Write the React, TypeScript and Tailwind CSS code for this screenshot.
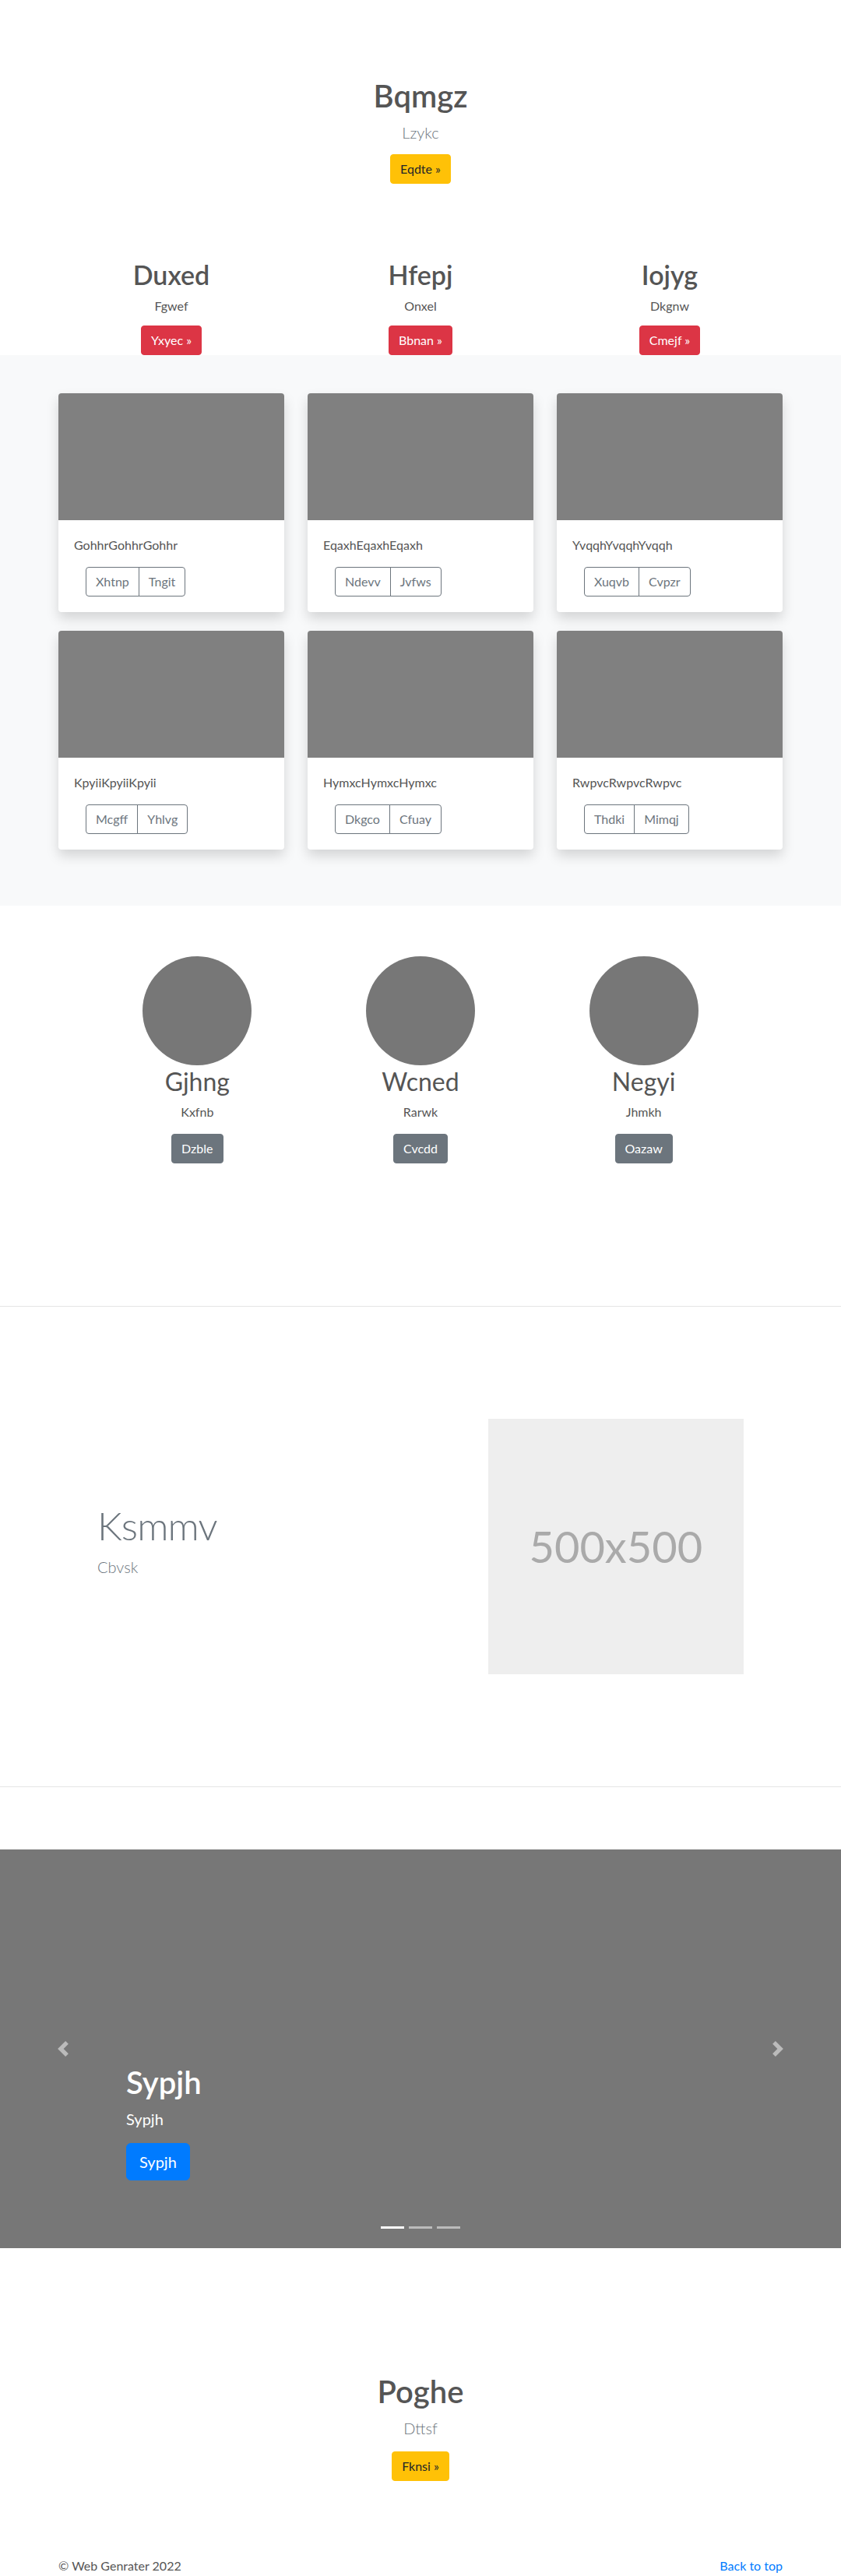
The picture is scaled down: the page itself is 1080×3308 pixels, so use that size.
import React from 'react'

const cols = [
  { t: 'Duxed', s: 'Fgwef', b: 'Yxyec »' },
  { t: 'Hfepj', s: 'Onxel', b: 'Bbnan »' },
  { t: 'Iojyg', s: 'Dkgnw', b: 'Cmejf »' },
]

const cards = [
  { t: 'GohhrGohhrGohhr', a: 'Xhtnp', b: 'Tngit' },
  { t: 'EqaxhEqaxhEqaxh', a: 'Ndevv', b: 'Jvfws' },
  { t: 'YvqqhYvqqhYvqqh', a: 'Xuqvb', b: 'Cvpzr' },
  { t: 'KpyiiKpyiiKpyii', a: 'Mcgff', b: 'Yhlvg' },
  { t: 'HymxcHymxcHymxc', a: 'Dkgco', b: 'Cfuay' },
  { t: 'RwpvcRwpvcRwpvc', a: 'Thdki', b: 'Mimqj' },
]

const people = [
  { t: 'Gjhng', s: 'Kxfnb', b: 'Dzble' },
  { t: 'Wcned', s: 'Rarwk', b: 'Cvcdd' },
  { t: 'Negyi', s: 'Jhmkh', b: 'Oazaw' },
]

function Chevron({ dir }: { dir: 'l' | 'r' }) {
  return (
    <svg width="20" height="20" viewBox="0 0 8 8" fill="#fff" opacity="0.5">
      {dir === 'l' ? (
        <path d="M5.25 0l-4 4 4 4 1.5-1.5L4.25 4l2.5-2.5L5.25 0z" />
      ) : (
        <path d="M2.75 0l-1.5 1.5L3.75 4l-2.5 2.5L2.75 8l4-4-4-4z" />
      )}
    </svg>
  )
}

export default function App() {
  return (
    <div className="bg-white font-[Lato,sans-serif] text-base leading-6 text-[#555]">
      {/* hero + three teasers */}
      <section className="pt-[99px] text-center">
        <h1 className="text-[40px] font-semibold leading-[48px] text-[#555]">Bqmgz</h1>
        <p className="mt-2 text-[20px] font-light leading-[30px] text-[#6c757d]">Lzykc</p>
        <div className="mt-[13px] flex justify-center">
          <a className="rounded border border-[#ffc107] bg-[#ffc107] px-3 py-[6px] text-[#212529]">Eqdte »</a>
        </div>

        <div className="mx-auto mt-[96px] grid w-[960px] grid-cols-3">
          {cols.map((c) => (
            <div key={c.t} className="px-[15px]">
              <h2 className="text-[34px] font-semibold leading-[41px] text-[#555]">{c.t}</h2>
              <p className="mt-2">{c.s}</p>
              <div className="mt-[13px] flex justify-center">
                <a className="rounded border border-[#dc3545] bg-[#dc3545] px-3 py-[6px] text-white">{c.b}</a>
              </div>
            </div>
          ))}
        </div>
      </section>

      {/* album */}
      <section className="bg-[#f8f9fa] pb-12 pt-[49px]">
        <div className="mx-auto grid w-[930px] grid-cols-3 gap-x-[30px]">
          {cards.map((c) => (
            <div key={c.t} className="mb-6 overflow-hidden rounded bg-white shadow-[0_8px_16px_rgba(0,0,0,0.15)]">
              <div className="h-[163px] bg-[#808080]" />
              <div className="p-5">
                <p className="mb-4">{c.t}</p>
                <div className="ml-[15px] flex">
                  <button className="rounded-l border border-[#6c757d] px-3 py-[6px] text-[#6c757d]">{c.a}</button>
                  <button className="-ml-px rounded-r border border-[#6c757d] px-3 py-[6px] text-[#6c757d]">{c.b}</button>
                </div>
              </div>
            </div>
          ))}
        </div>
      </section>

      {/* marketing */}
      <section className="pb-[183px] pt-[65px]">
        <div className="mx-auto grid w-[860px] grid-cols-3 text-center">
          {people.map((p) => (
            <div key={p.t} className="px-[15px]">
              <div className="mx-auto h-[140px] w-[140px] rounded-full bg-[#777]" />
              <h2 className="mt-[2px] text-[32px] font-normal leading-[38px] text-[#555]">{p.t}</h2>
              <p className="mt-2">{p.s}</p>
              <div className="mt-4 flex justify-center">
                <a className="rounded border border-[#6c757d] bg-[#6c757d] px-3 py-[6px] text-white">{p.b}</a>
              </div>
            </div>
          ))}
        </div>
      </section>

      <hr className="border-t border-[#e5e5e5]" />

      <section className="py-[144px]">
        <div className="mx-auto flex w-[860px] items-center">
          <div className="w-7/12 px-[15px]">
            <h2 className="text-[50px] font-light leading-[60px] tracking-[-0.8px] text-[#6c757d]">Ksmmv</h2>
            <p className="mb-4 mt-2 text-[20px] font-light leading-[30px] text-[#6c757d]">Cbvsk</p>
          </div>
          <div className="w-5/12 px-[15px]">
            <div className="flex aspect-square w-full items-center justify-center bg-[#eee] text-[56px] text-[#aaa]">
              500x500
            </div>
          </div>
        </div>
      </section>

      <hr className="border-t border-[#e5e5e5]" />

      {/* carousel */}
      <section className="relative mt-[80px] h-[512px] bg-[#777]">
        <div className="absolute bottom-0 left-0 top-0 flex w-[15%] items-center justify-center">
          <Chevron dir="l" />
        </div>
        <div className="absolute bottom-0 right-0 top-0 flex w-[15%] items-center justify-center">
          <Chevron dir="r" />
        </div>
        <div className="absolute bottom-[87px] left-[15%] right-[15%] text-white">
          <h1 className="text-[40px] font-semibold leading-[48px]">Sypjh</h1>
          <p className="mt-2 text-[20px] leading-[30px]">Sypjh</p>
          <div className="mt-4 flex">
            <a className="rounded-md border border-[#007bff] bg-[#007bff] px-4 py-2 text-[20px] leading-[30px] text-white">Sypjh</a>
          </div>
        </div>
        <div className="absolute bottom-[25px] left-0 right-0 flex justify-center gap-[6px]">
          <span className="h-[3px] w-[30px] bg-white" />
          <span className="h-[3px] w-[30px] bg-white/50" />
          <span className="h-[3px] w-[30px] bg-white/50" />
        </div>
      </section>

      {/* closing call */}
      <section className="pt-[160px] text-center">
        <h1 className="text-[40px] font-semibold leading-[48px] text-[#555]">Poghe</h1>
        <p className="mt-2 text-[20px] font-light leading-[30px] text-[#6c757d]">Dttsf</p>
        <div className="mt-[15px] flex justify-center">
          <a className="rounded border border-[#ffc107] bg-[#ffc107] px-3 py-[6px] text-[#212529]">Fknsi »</a>
        </div>
      </section>

      <footer className="mx-auto mt-[97px] flex w-[930px] justify-between">
        <p>© Web Genrater 2022</p>
        <a className="text-[#007bff]">Back to top</a>
      </footer>
    </div>
  )
}
